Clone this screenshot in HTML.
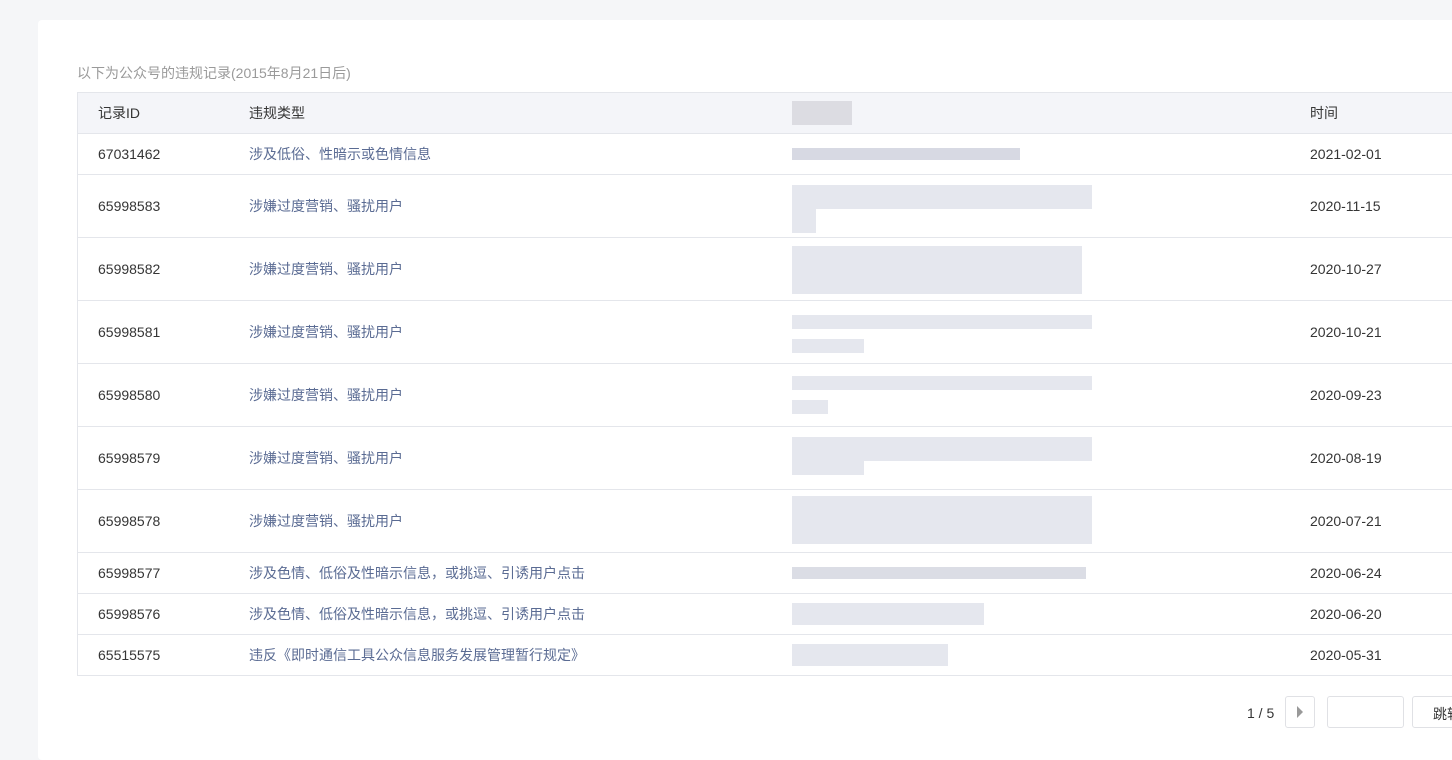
<!DOCTYPE html>
<html><head><meta charset="utf-8"><style>
body{margin:0;width:1452px;height:746px;background:#f5f6f8;overflow:hidden;font-family:"Liberation Sans","Noto Sans CJK SC",sans-serif;font-size:14px;color:#353535;position:relative}
.card{position:absolute;left:38px;top:20px;width:1430px;height:740px;background:#fff;border-radius:4px}
.note{position:absolute;left:77px;top:63px;color:#9a9a9a;font-size:14px}
.tbl{position:absolute;left:77px;top:92px;width:1400px;border:1px solid #e4e6eb;border-right:none}
.row{position:relative;border-top:1px solid #e4e6eb;display:flex;align-items:center}
.row:first-child{border-top:none;background:#f4f5f9}
.c1{position:absolute;left:20px}.c2{position:absolute;left:171px;color:#5a6b93}.c4{position:absolute;left:1232px}
.row:first-child .c2{color:#353535}
.bl{position:absolute;left:714px;background:#dfe1ea;opacity:.8;height:16px}
.pg{position:absolute;top:696px;color:#353535}
.box{position:absolute;top:696px;height:30px;border:1px solid #e0e1e5;border-radius:3px;background:#fff}
</style></head><body>
<div class="card"></div>
<div class="note">以下为公众号的违规记录(2015年8月21日后)</div>
<div class="tbl">
<div class="row" style="height:40px"><span class="c1">记录ID</span><span class="c2">违规类型</span><div class="bl" style="width:60px;height:24px;background:#d6d6dc"></div><span class="c4">时间</span></div>
<div class="row" style="height:40px"><span class="c1">67031462</span><span class="c2">涉及低俗、性暗示或色情信息</span><div class="bl" style="width:228px;height:12px;background:#cdd0dc"></div><span class="c4">2021-02-01</span></div>
<div class="row" style="height:62px"><span class="c1">65998583</span><span class="c2">涉嫌过度营销、骚扰用户</span><div class="bl" style="width:300px;height:24px;top:10px"></div><div class="bl" style="width:24px;height:24px;top:34px"></div><span class="c4">2020-11-15</span></div>
<div class="row" style="height:62px"><span class="c1">65998582</span><span class="c2">涉嫌过度营销、骚扰用户</span><div class="bl" style="width:290px;height:48px;top:8px"></div><span class="c4">2020-10-27</span></div>
<div class="row" style="height:62px"><span class="c1">65998581</span><span class="c2">涉嫌过度营销、骚扰用户</span><div class="bl" style="width:300px;height:14px;top:14px"></div><div class="bl" style="width:72px;height:14px;top:38px"></div><span class="c4">2020-10-21</span></div>
<div class="row" style="height:62px"><span class="c1">65998580</span><span class="c2">涉嫌过度营销、骚扰用户</span><div class="bl" style="width:300px;height:14px;top:12px"></div><div class="bl" style="width:36px;height:14px;top:36px"></div><span class="c4">2020-09-23</span></div>
<div class="row" style="height:62px"><span class="c1">65998579</span><span class="c2">涉嫌过度营销、骚扰用户</span><div class="bl" style="width:300px;height:24px;top:10px"></div><div class="bl" style="width:72px;height:14px;top:34px"></div><span class="c4">2020-08-19</span></div>
<div class="row" style="height:62px"><span class="c1">65998578</span><span class="c2">涉嫌过度营销、骚扰用户</span><div class="bl" style="width:300px;height:48px;top:6px"></div><span class="c4">2020-07-21</span></div>
<div class="row" style="height:40px"><span class="c1">65998577</span><span class="c2">涉及色情、低俗及性暗示信息，或挑逗、引诱用户点击</span><div class="bl" style="width:294px;height:12px;background:#d2d4de"></div><span class="c4">2020-06-24</span></div>
<div class="row" style="height:40px"><span class="c1">65998576</span><span class="c2">涉及色情、低俗及性暗示信息，或挑逗、引诱用户点击</span><div class="bl" style="width:192px;height:22px"></div><span class="c4">2020-06-20</span></div>
<div class="row" style="height:40px"><span class="c1">65515575</span><span class="c2">违反《即时通信工具公众信息服务发展管理暂行规定》</span><div class="bl" style="width:156px;height:22px"></div><span class="c4">2020-05-31</span></div>
</div>
<div class="pg" style="left:1247px;top:705px">1 / 5</div>
<div class="box" style="left:1285px;width:28px"><div style="position:absolute;left:11px;top:9px;border-left:6px solid #999;border-top:6px solid transparent;border-bottom:6px solid transparent"></div></div>
<div class="box" style="left:1327px;width:75px"></div>
<div class="box" style="left:1412px;width:60px"><span style="position:absolute;left:20px;top:7px">跳转</span></div>
</body></html>
